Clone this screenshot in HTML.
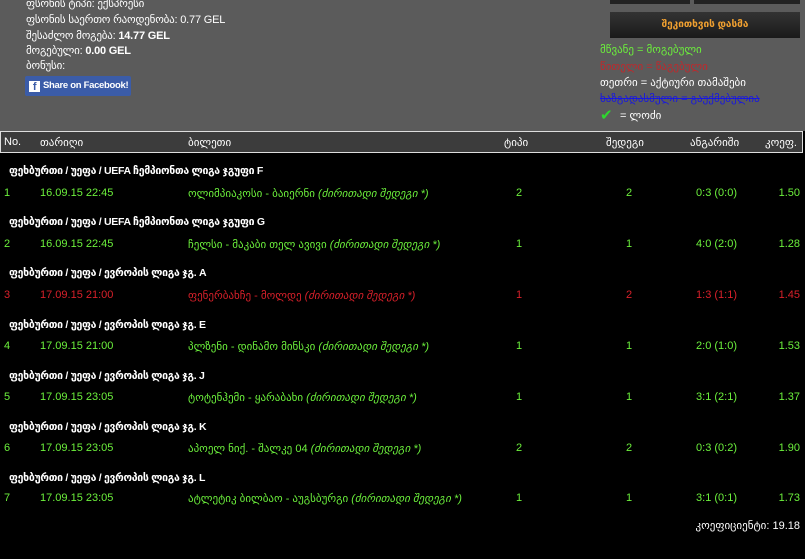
<!DOCTYPE html>
<html><head><meta charset="utf-8"><style>
body{margin:0;width:805px;height:559px;overflow:hidden;background:#000;font-family:"Liberation Sans","DejaVu Sans",sans-serif;font-size:11px;position:relative}
.top{position:absolute;left:0;top:0;width:805px;height:131px;background:#5b5b5b}
.a{position:absolute;white-space:nowrap}
.w{color:#fff}.g{color:#6cf03c}.r{color:#d8202a}
.info{color:#fff;font-size:11px;letter-spacing:-0.2px}
.hdr{position:absolute;left:0;top:131px;width:801px;height:20px;background:#3c3c3c;border:1px solid #ddd;color:#fff}
.cat{color:#fff;font-size:10.5px;letter-spacing:-0.3px;font-weight:bold}
.i{font-style:italic}
</style></head><body>
<div class="top"></div>
<div class="a info" style="left:26px;top:-3px">ფსონის ტიპი: ექსპრესი</div>
<div class="a info" style="left:26px;top:13px">ფსონის საერთო რაოდენობა: 0.77 GEL</div>
<div class="a info" style="left:26px;top:29px">შესაძლო მოგება: <b>14.77 GEL</b></div>
<div class="a info" style="left:26px;top:44px">მოგებული: <b>0.00 GEL</b></div>
<div class="a info" style="left:26px;top:59px">ბონუსი:</div>
<div class="a" style="left:25px;top:76px;width:106px;height:20px;background:#3b5ca8;border-radius:2px;color:#fff;font-weight:bold;font-size:9.5px;line-height:20px;letter-spacing:-0.3px">
<span style="display:inline-block;width:11px;height:11px;background:#fff;color:#3b5ca8;margin:0 3px 0 4px;vertical-align:-2px;text-align:center;line-height:13px;font-size:11px">f</span>Share on Facebook!</div>
<div class="a" style="left:610px;top:0;width:80px;height:4px;background:#222"></div>
<div class="a" style="left:694px;top:0;width:106px;height:4px;background:#222"></div>
<div class="a" style="left:610px;top:12px;width:190px;height:26px;background:linear-gradient(#333,#1a1a1a);color:#f0a030;font-weight:bold;font-size:10px;text-align:center;line-height:26px">შეკითხვის დასმა</div>
<div class="a g" style="left:600px;top:43px">მწვანე = მოგებული</div>
<div class="a" style="left:600px;top:60px;color:#c0282c">წითელი = წაგებული</div>
<div class="a w" style="left:600px;top:76px">თეთრი = აქტიური თამაშები</div>
<div class="a" style="left:600px;top:92px;color:#1818e0;text-decoration:line-through">ხაზგადასმული = გაუქმებულია</div>
<div class="a g" style="left:600px;top:106px;font-size:15px;font-weight:bold;color:#2ed62e">✔</div>
<div class="a w" style="left:620px;top:109px">= ლოძი</div>
<div class="hdr"></div>
<div class="a w" style="left:4px;top:136px">No.</div>
<div class="a w" style="left:40px;top:136px">თარიღი</div>
<div class="a w" style="left:188px;top:136px">ბილეთი</div>
<div class="a w" style="left:504px;top:136px">ტიპი</div>
<div class="a w" style="left:606px;top:136px">შედეგი</div>
<div class="a w" style="left:690px;top:136px">ანგარიში</div>
<div class="a w" style="left:765px;top:136px">კოეფ.</div>

<div class="a cat" style="left:9px;top:165px">ფეხბურთი / უეფა / UEFA ჩემპიონთა ლიგა ჯგუფი F</div>
<div class="a g" style="left:4px;top:187px">1</div><div class="a g" style="left:40px;top:187px">16.09.15 22:45</div><div class="a g" style="left:188px;top:187px">ოლიმპიაკოსი - ბაიერნი <span class="i">(ძირითადი შედეგი *)</span></div><div class="a g" style="left:516px;top:187px">2</div><div class="a g" style="left:626px;top:187px">2</div><div class="a g" style="left:690px;top:187px;width:47px;text-align:right">0:3 (0:0)</div><div class="a g" style="left:760px;top:187px;width:40px;text-align:right">1.50</div>

<div class="a cat" style="left:9px;top:216px">ფეხბურთი / უეფა / UEFA ჩემპიონთა ლიგა ჯგუფი G</div>
<div class="a g" style="left:4px;top:238px">2</div><div class="a g" style="left:40px;top:238px">16.09.15 22:45</div><div class="a g" style="left:188px;top:238px">ჩელსი - მაკაბი თელ ავივი <span class="i">(ძირითადი შედეგი *)</span></div><div class="a g" style="left:516px;top:238px">1</div><div class="a g" style="left:626px;top:238px">1</div><div class="a g" style="left:690px;top:238px;width:47px;text-align:right">4:0 (2:0)</div><div class="a g" style="left:760px;top:238px;width:40px;text-align:right">1.28</div>

<div class="a cat" style="left:9px;top:267px">ფეხბურთი / უეფა / ევროპის ლიგა ჯგ. A</div>
<div class="a r" style="left:4px;top:289px">3</div><div class="a r" style="left:40px;top:289px">17.09.15 21:00</div><div class="a r" style="left:188px;top:289px">ფენერბახჩე - მოლდე <span class="i">(ძირითადი შედეგი *)</span></div><div class="a r" style="left:516px;top:289px">1</div><div class="a r" style="left:626px;top:289px">2</div><div class="a r" style="left:690px;top:289px;width:47px;text-align:right">1:3 (1:1)</div><div class="a r" style="left:760px;top:289px;width:40px;text-align:right">1.45</div>

<div class="a cat" style="left:9px;top:319px">ფეხბურთი / უეფა / ევროპის ლიგა ჯგ. E</div>
<div class="a g" style="left:4px;top:340px">4</div><div class="a g" style="left:40px;top:340px">17.09.15 21:00</div><div class="a g" style="left:188px;top:340px">პლზენი - დინამო მინსკი <span class="i">(ძირითადი შედეგი *)</span></div><div class="a g" style="left:516px;top:340px">1</div><div class="a g" style="left:626px;top:340px">1</div><div class="a g" style="left:690px;top:340px;width:47px;text-align:right">2:0 (1:0)</div><div class="a g" style="left:760px;top:340px;width:40px;text-align:right">1.53</div>

<div class="a cat" style="left:9px;top:370px">ფეხბურთი / უეფა / ევროპის ლიგა ჯგ. J</div>
<div class="a g" style="left:4px;top:391px">5</div><div class="a g" style="left:40px;top:391px">17.09.15 23:05</div><div class="a g" style="left:188px;top:391px">ტოტენჰემი - ყარაბახი <span class="i">(ძირითადი შედეგი *)</span></div><div class="a g" style="left:516px;top:391px">1</div><div class="a g" style="left:626px;top:391px">1</div><div class="a g" style="left:690px;top:391px;width:47px;text-align:right">3:1 (2:1)</div><div class="a g" style="left:760px;top:391px;width:40px;text-align:right">1.37</div>

<div class="a cat" style="left:9px;top:421px">ფეხბურთი / უეფა / ევროპის ლიგა ჯგ. K</div>
<div class="a g" style="left:4px;top:442px">6</div><div class="a g" style="left:40px;top:442px">17.09.15 23:05</div><div class="a g" style="left:188px;top:442px">აპოელ ნიქ. - შალკე 04 <span class="i">(ძირითადი შედეგი *)</span></div><div class="a g" style="left:516px;top:442px">2</div><div class="a g" style="left:626px;top:442px">2</div><div class="a g" style="left:690px;top:442px;width:47px;text-align:right">0:3 (0:2)</div><div class="a g" style="left:760px;top:442px;width:40px;text-align:right">1.90</div>

<div class="a cat" style="left:9px;top:472px">ფეხბურთი / უეფა / ევროპის ლიგა ჯგ. L</div>
<div class="a g" style="left:4px;top:492px">7</div><div class="a g" style="left:40px;top:492px">17.09.15 23:05</div><div class="a g" style="left:188px;top:492px">ატლეტიკ ბილბაო - აუგსბურგი <span class="i">(ძირითადი შედეგი *)</span></div><div class="a g" style="left:516px;top:492px">1</div><div class="a g" style="left:626px;top:492px">1</div><div class="a g" style="left:690px;top:492px;width:47px;text-align:right">3:1 (0:1)</div><div class="a g" style="left:760px;top:492px;width:40px;text-align:right">1.73</div>

<div class="a w" style="left:600px;top:519px;width:200px;text-align:right">კოეფიციენტი: 19.18</div>
</body></html>
